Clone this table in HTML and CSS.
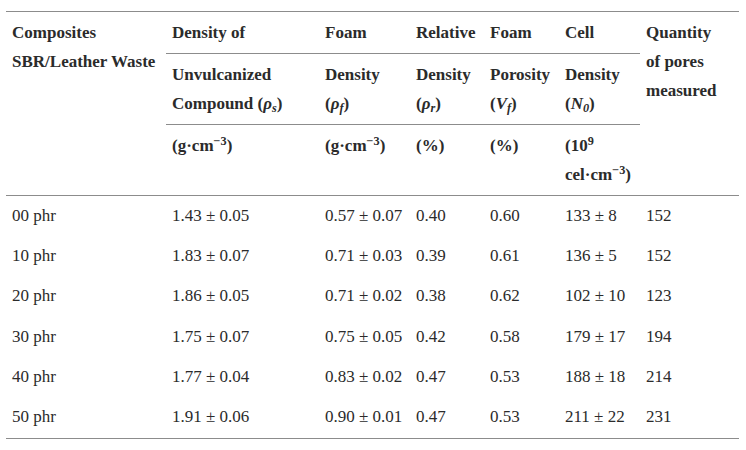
FILE: index.html
```html
<!DOCTYPE html>
<html>
<head>
<meta charset="utf-8">
<link rel="stylesheet" href="styles.css">
</head>
<body>
<table class="data">
  <colgroup>
    <col class="c1"><col class="c2"><col class="c3"><col class="c4"><col class="c5"><col class="c6"><col class="c7">
  </colgroup>
  <thead>
    <tr class="h1">
      <th rowspan="3" class="side">Composites<br>SBR/Leather Waste</th>
      <th class="grp">Density of</th>
      <th class="grp">Foam</th>
      <th class="grp">Relative</th>
      <th class="grp">Foam</th>
      <th class="grp">Cell</th>
      <th rowspan="3" class="side">Quantity<br>of pores<br>measured</th>
    </tr>
    <tr class="h2">
      <th class="grp">Unvulcanized<br>Compound (<i class="m">ρ<sub>s</sub></i>)</th>
      <th class="grp">Density<br>(<i class="m">ρ<sub>f</sub></i>)</th>
      <th class="grp">Density<br>(<i class="m">ρ<sub>r</sub></i>)</th>
      <th class="grp">Porosity<br>(<i class="m">V<sub>f</sub></i>)</th>
      <th class="grp">Density<br>(<i class="m">N<sub>0</sub></i>)</th>
    </tr>
    <tr class="h3">
      <th>(g·cm<sup>−3</sup>)</th>
      <th>(g·cm<sup>−3</sup>)</th>
      <th>(%)</th>
      <th>(%)</th>
      <th>(10<sup>9</sup><br>cel·cm<sup>−3</sup>)</th>
    </tr>
  </thead>
  <tbody>
    <tr><td>00 phr</td><td>1.43 ± 0.05</td><td>0.57 ± 0.07</td><td>0.40</td><td>0.60</td><td>133 ± 8</td><td>152</td></tr>
    <tr><td>10 phr</td><td>1.83 ± 0.07</td><td>0.71 ± 0.03</td><td>0.39</td><td>0.61</td><td>136 ± 5</td><td>152</td></tr>
    <tr><td>20 phr</td><td>1.86 ± 0.05</td><td>0.71 ± 0.02</td><td>0.38</td><td>0.62</td><td>102 ± 10</td><td>123</td></tr>
    <tr><td>30 phr</td><td>1.75 ± 0.07</td><td>0.75 ± 0.05</td><td>0.42</td><td>0.58</td><td>179 ± 17</td><td>194</td></tr>
    <tr><td>40 phr</td><td>1.77 ± 0.04</td><td>0.83 ± 0.02</td><td>0.47</td><td>0.53</td><td>188 ± 18</td><td>214</td></tr>
    <tr><td>50 phr</td><td>1.91 ± 0.06</td><td>0.90 ± 0.01</td><td>0.47</td><td>0.53</td><td>211 ± 22</td><td>231</td></tr>
  </tbody>
</table>
</body>
</html>
```
FILE: styles.css
```css
html, body {
  margin: 0;
  padding: 0;
  background: #ffffff;
}
body {
  padding: 11px 0 0 6px;
  font-family: "Liberation Serif", "Times New Roman", serif;
  font-size: 17px;
  color: #2b2b2b;
}
.data {
  border-collapse: collapse;
  table-layout: fixed;
  width: 733px;
  border-top: 1px solid #8c8c8c;
  border-bottom: 1px solid #8c8c8c;
}
.c1 { width: 160px; }
.c2 { width: 153px; }
.c3 { width: 91px; }
.c4 { width: 74px; }
.c5 { width: 75px; }
.c6 { width: 81px; }
.c7 { width: 99px; }
.data th,
.data td {
  text-align: left;
  vertical-align: top;
  line-height: 29px;
  padding: 6px 6px;
  white-space: nowrap;
}
.data th {
  font-weight: bold;
}
.data thead {
  border-bottom: 1px solid #8c8c8c;
}
.h1 .grp,
.h2 .grp {
  border-bottom: 1px solid #8c8c8c;
}
.data td {
  font-weight: normal;
  padding: 4.5px 6px 6.9px;
}
.m {
  font-style: italic;
}
sub, sup {
  font-size: 0.72em;
  line-height: 0;
}
sub {
  vertical-align: -0.25em;
}
sup {
  vertical-align: 0.5em;
}
```
